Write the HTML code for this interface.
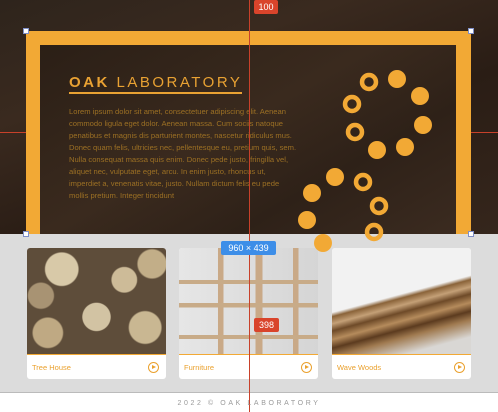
<!DOCTYPE html><html><head><style>
*{margin:0;padding:0;box-sizing:border-box}
body{width:498px;height:412px;overflow:hidden;background:#fff;font-family:"Liberation Sans",sans-serif;position:relative}
.a{position:absolute}
#top{left:0;top:0;width:498px;height:234px;background:linear-gradient(160deg,#2e241c 0%,#3a2a1f 30%,#2a1d15 60%,#35261c 100%)}
#frame{left:26px;top:31px;width:445px;height:203px;background:#f2a935}
#inner{left:40px;top:45px;width:416px;height:189px;background:linear-gradient(150deg,#2b1f16 0%,#3a2a1e 45%,#2e2118 70%,#3b2b20 100%)}
h1{position:absolute;left:69px;top:74px;font-size:15px;font-weight:normal;letter-spacing:2.5px;color:#e9a233;white-space:nowrap}
h1 b{font-weight:bold}
#ul{left:69px;top:92px;width:173px;height:1.5px;background:#e9a233}
p{position:absolute;left:69px;top:106px;width:229px;font-size:7.6px;line-height:12px;color:#9c7024}
#gray{left:0;top:234px;width:498px;height:159px;background:#dcdcdc;border-bottom:1px solid #bbb}
.card{position:absolute;top:248px;width:139px;height:131px;background:#fff;border-radius:3px;overflow:hidden}
.img{position:absolute;left:0;top:0;width:100%;height:107px;border-bottom:1.5px solid #f2a935}
.lbl{position:absolute;left:32px;top:363px;font-size:7.5px;color:#eaa12e}
.pl{position:absolute;width:11px;height:11px;border:1.3px solid #eaa12e;border-radius:50%;top:362px}
.pl:after{content:"";position:absolute;left:3.3px;top:2px;border-left:4px solid #eaa12e;border-top:2.5px solid transparent;border-bottom:2.5px solid transparent}
#foot{left:0;top:400px;width:498px;text-align:center;font-size:7px;letter-spacing:2.6px;color:#9a9a9a}
.h{position:absolute;width:6px;height:6px;background:#fff;border:1px solid #7f8fc8}
.tag{position:absolute;color:#fff;font-size:9px;text-align:center;border-radius:2px;line-height:14px}
</style></head><body>
<div id="top" class="a"></div>
<div id="frame" class="a"></div>
<div id="inner" class="a"></div>
<h1><b>OAK</b> LABORATORY</h1>
<div id="ul" class="a"></div>
<p>Lorem ipsum dolor sit amet, consectetuer adipiscing elit. Aenean commodo ligula eget dolor. Aenean massa. Cum sociis natoque penatibus et magnis dis parturient montes, nascetur ridiculus mus. Donec quam felis, ultricies nec, pellentesque eu, pretium quis, sem. Nulla consequat massa quis enim. Donec pede justo, fringilla vel, aliquet nec, vulputate eget, arcu. In enim justo, rhoncus ut, imperdiet a, venenatis vitae, justo. Nullam dictum felis eu pede mollis pretium. Integer tincidunt</p>
<div id="gray" class="a"></div>
<div class="card" style="left:27px"><div class="img" style="background:radial-gradient(circle at 25% 20%,#d8c9a8 0 12%,transparent 13%),radial-gradient(circle at 70% 30%,#cdbb98 0 10%,transparent 11%),radial-gradient(circle at 50% 65%,#d2c3a3 0 14%,transparent 15%),radial-gradient(circle at 15% 80%,#bfa983 0 10%,transparent 11%),radial-gradient(circle at 85% 75%,#c9b792 0 11%,transparent 12%),radial-gradient(circle at 90% 15%,#c2ae88 0 9%,transparent 10%),radial-gradient(circle at 10% 45%,#a89373 0 9%,transparent 10%),#5e4d3a"></div></div>
<div class="card" style="left:179px"><div class="img" style="background:linear-gradient(#0000 0 30%,#c8ab88 30% 34%,#0000 34% 52%,#c8ab88 52% 56%,#0000 56% 82%,#c8ab88 82% 86%,#0000 86%),linear-gradient(90deg,#0000 0 28%,#c9a987 28% 32%,#0000 32% 55%,#c9a987 55% 60%,#0000 60% 82%,#c9a987 82% 86%,#0000 86%),linear-gradient(90deg,#e6e6e6,#d5d5d5)"></div></div>
<div class="card" style="left:332px"><div class="img" style="background:linear-gradient(165deg,#f2f2f2 0 45%,#8a6339 48%,#c4a077 53%,#6e4a28 58%,#b58b5c 64%,#5c3b1f 70%,#a07a50 76%,#d9d7d4 88%)"></div></div>
<div class="lbl">Tree House</div><div class="pl" style="left:148px"></div>
<div class="lbl" style="left:184px">Furniture</div><div class="pl" style="left:301px"></div>
<div class="lbl" style="left:337px">Wave Woods</div><div class="pl" style="left:454px"></div>
<svg class="a" style="left:0;top:0" width="498" height="412">
<g fill="#f2a935"><circle cx="397" cy="79" r="9"/><circle cx="420" cy="96" r="9"/><circle cx="423" cy="125" r="9"/><circle cx="405" cy="147" r="9"/><circle cx="377" cy="150" r="9"/><circle cx="335" cy="177" r="9"/><circle cx="312" cy="193" r="9"/><circle cx="307" cy="220" r="9"/><circle cx="323" cy="243" r="9"/></g>
<g fill="none" stroke="#f2a935" stroke-width="4.5"><circle cx="369" cy="82" r="7"/><circle cx="352" cy="104" r="7"/><circle cx="355" cy="132" r="7"/><circle cx="363" cy="182" r="7"/><circle cx="379" cy="206" r="7"/><circle cx="374" cy="232" r="7"/></g>
<g stroke="#c8412a" stroke-width="1"><line x1="249.5" y1="0" x2="249.5" y2="412"/><line x1="0" y1="132.5" x2="26" y2="132.5"/><line x1="471" y1="132.5" x2="498" y2="132.5"/></g>
</svg>
<div class="h" style="left:23px;top:28px"></div><div class="h" style="left:468px;top:28px"></div><div class="h" style="left:23px;top:231px"></div><div class="h" style="left:468px;top:231px"></div>
<div class="tag" style="left:254px;top:0;width:24px;background:#d9442b">100</div>
<div class="tag" style="left:221px;top:241px;width:55px;background:#3d8ee8">960 × 439</div>
<div class="tag" style="left:254px;top:318px;width:25px;background:#d9442b">398</div>
<div id="foot" class="a">2022 © OAK LABORATORY</div>
</body></html>
